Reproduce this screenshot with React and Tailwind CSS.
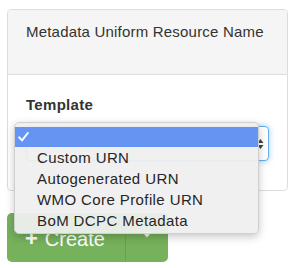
import React from "react";

export default function App() {
  const font = { fontFamily: '"Liberation Sans", Arial, sans-serif' };
  const items = ["Custom URN", "Autogenerated URN", "WMO Core Profile URN", "BoM DCPC Metadata"];
  return (
    <div className="relative w-[295px] h-[268px] bg-white overflow-hidden" style={font}>
      <div className="pt-[9px] pl-[7px]">
        <div className="w-[281px] h-[182px] border border-[#dddddd] rounded-[4px] overflow-hidden">
          <div className="h-[65px] bg-[#f5f5f5] border-b border-[#dddddd] pl-[18px] pt-[12px] text-[15px] tracking-[0.2px] leading-[20px] text-[#333333]">
            Metadata Uniform Resource Name
          </div>
          <div className="pl-[18px] pt-[20px]">
            <div className="text-[15px] tracking-[0.3px] leading-[20px] font-bold text-[#333333]">Template</div>
            <div className="mt-[11px] w-[243px] h-[35px] rounded-[4px] border border-[#66afe9] shadow-[0_0_6px_rgba(102,175,233,0.6)] bg-white flex items-center justify-end pr-[4px]">
              <svg width="7" height="12" viewBox="0 0 7 12">
                <path d="M0.5 5 L3.5 1 L6.5 5 Z" fill="#444" />
                <path d="M0.5 7 L3.5 11 L6.5 7 Z" fill="#444" />
              </svg>
            </div>
          </div>
        </div>
      </div>
      <div className="mt-[22px] ml-[7px] w-[161px] h-[49px] rounded-[5px] bg-[#76b15b] flex text-white">
        <div className="w-[118px] flex items-center pl-[18px] text-[20px] leading-[24px] gap-[7px] pt-[2px]">
          <span className="font-bold text-[22px]">+</span>
          <span>Create</span>
        </div>
        <div className="flex-1 border-l border-[#68a24e] flex items-center justify-center pb-[6px]">
          <svg width="10" height="6" viewBox="0 0 10 6">
            <path d="M0 0 L10 0 L5 5.5 Z" fill="#f2f7ef" />
          </svg>
        </div>
      </div>
      <div className="absolute left-[14px] top-[122px] w-[245px] pt-[4px] pb-[2px] rounded-[5px] bg-[rgba(239,239,239,0.94)] border border-[#cfcfcf] shadow-[0_3px_8px_rgba(0,0,0,0.22)] text-[15px] tracking-[0.4px] text-[#262626]">
        <div className="h-[20px] bg-[#6495f2] flex items-center pl-[3px]">
          <svg width="11" height="10" viewBox="0 0 11 10">
            <path d="M1.2 5.4 L4 8.4 L9.8 1" fill="none" stroke="white" strokeWidth="2" strokeLinecap="round" strokeLinejoin="round" />
          </svg>
        </div>
        {items.map((t) => (
          <div key={t} className="h-[21px] leading-[21px] pl-[22px]">{t}</div>
        ))}
      </div>
    </div>
  );
}
